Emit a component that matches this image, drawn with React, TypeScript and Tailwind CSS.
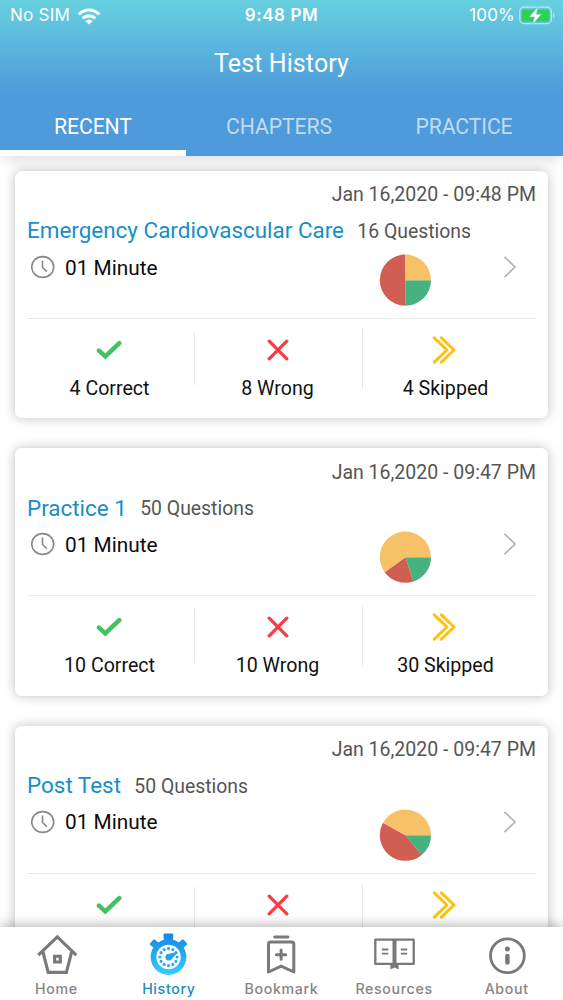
import React from "react";

type Result = {
  date: string;
  title: string;
  questions: number;
  correct: number;
  wrong: number;
  skipped: number;
};

const results: Result[] = [
  { date: "Jan 16,2020 - 09:48 PM", title: "Emergency Cardiovascular Care", questions: 16, correct: 4, wrong: 8, skipped: 4 },
  { date: "Jan 16,2020 - 09:47 PM", title: "Practice 1", questions: 50, correct: 10, wrong: 10, skipped: 30 },
  { date: "Jan 16,2020 - 09:47 PM", title: "Post Test", questions: 50, correct: 7, wrong: 22, skipped: 21 },
];

function Pie({ correct, wrong, skipped }: Pick<Result, "correct" | "wrong" | "skipped">) {
  const total = correct + wrong + skipped;
  const slices = [
    { value: correct, color: "#45b280" },
    { value: wrong, color: "#d15e52" },
    { value: skipped, color: "#f7c168" },
  ];
  let start = 0;
  return (
    <svg className="size-[52px]" viewBox="-26.4 -26.2 52 52">
      {slices.map(({ value, color }) => {
        const end = start + (value / total) * Math.PI * 2;
        const r = 25.6;
        const d = `M0 0L${r * Math.cos(start)} ${r * Math.sin(start)}A${r} ${r} 0 ${end - start > Math.PI ? 1 : 0} 1 ${r * Math.cos(end)} ${r * Math.sin(end)}Z`;
        start = end;
        return <path key={color} d={d} fill={color} />;
      })}
    </svg>
  );
}

function Stat({ icon, label }: { icon: React.ReactNode; label: string }) {
  return (
    <div className="flex w-[167px] flex-col items-center pr-0.5">
      <div className="mt-[17px] flex h-7 items-center">{icon}</div>
      <div className="mt-[13px] text-[19.6px] leading-6 text-[#111] whitespace-nowrap">{label}</div>
    </div>
  );
}

function Card({ r }: { r: Result }) {
  return (
    <section className="mb-[30px] h-[247.4px] shrink-0 rounded-[7px] bg-white px-3 shadow-[0_0_12px_rgba(0,0,0,0.26)]">
      <div className="flex h-[46px] items-center justify-end pt-0.5 text-[19.5px] text-[#555]">{r.date}</div>
      <div className="flex h-7 items-center whitespace-nowrap">
        <span className="text-[22.45px] text-[#168fc7]">{r.title}</span>
        <span className="ml-[13.3px] text-[19.4px] text-[#555] pt-px">{r.questions} Questions</span>
      </div>
      <div className="flex h-[73px] items-start">
        <svg className="mt-2.5 ml-1 size-6" viewBox="0 0 24 24" fill="none" stroke="#898989" strokeWidth="1.6">
          <ellipse cx="11.7" cy="12" rx="11" ry="10.4" />
          <path d="M11.5 5.5v7l4.4 4.2" />
        </svg>
        <span className="ml-[10px] mt-[8.5px] w-[314px] text-[20.8px] leading-7 text-[#0c0c0c]">01 Minute</span>
        <div className="mt-[9px]"><Pie {...r} /></div>
        <svg className="mt-2.5 ml-[71px] h-6 w-4" viewBox="0 0 16 24" fill="none" stroke="#b3b3b3" strokeWidth="1.7">
          <path d="M2.5 1.8 13 12 2.5 22.2" />
        </svg>
      </div>
      <div className="flex border-t border-[#ebebeb]">
        <Stat
          label={`${r.correct} Correct`}
          icon={
            <svg className="mr-px h-5 w-[26px]" viewBox="0 0 26 20" fill="none" stroke="#43c35f" strokeWidth="4.5" strokeLinecap="round" strokeLinejoin="miter">
              <path d="m3 10.6 6.3 5.8L23.3 3.2" />
            </svg>
          }
        />
        <div className="mt-[13px] h-[53px] w-px bg-[#e8e8e8]" />
        <Stat
          label={`${r.wrong} Wrong`}
          icon={
            <svg className="size-[22px]" viewBox="0 0 22 22" fill="none" stroke="#fb3b43" strokeWidth="3.3" strokeLinecap="round">
              <path d="m2.2 2.2 17.6 17.6M19.8 2.2 2.2 19.8" />
            </svg>
          }
        />
        <div className="mt-2.5 h-[60px] w-px bg-[#e8e8e8]" />
        <Stat
          label={`${r.skipped} Skipped`}
          icon={
            <svg className="mr-[3px] h-7 w-6" viewBox="0 0 24 28" fill="none" stroke="#fcc20f" strokeWidth="3" strokeLinecap="round" strokeLinejoin="round">
              <path d="M2.3 1.9 14.9 14 2.3 26.1M9.4 1.9 22 14 9.4 26.1" />
            </svg>
          }
        />
      </div>
    </section>
  );
}

const ticks = Array.from({ length: 12 }, (_, i) => i * 30);

const navItems = [
  {
    label: "Home",
    icon: (
      <svg className="size-[42px]" viewBox="0 0 42 42" fill="none" stroke="#797979" strokeWidth="3.1">
        <path d="M3.3 22.2 22.3 3.8 41.2 22.2" />
        <path d="M8 19 13.2 39.4h18.2L36.6 19" />
        <path d="M19.6 23.3h5.7v5.7h-5.7z" />
      </svg>
    ),
  },
  {
    label: "History",
    icon: (
      <svg className="size-[42px]" viewBox="0.4 -0.5 42 42">
        <defs>
          <linearGradient id="watch" gradientUnits="userSpaceOnUse" x1="0" y1="0" x2="0" y2="42">
            <stop offset="0" stopColor="#1685e7" />
            <stop offset="1" stopColor="#35cffb" />
          </linearGradient>
        </defs>
        <g fill="url(#watch)">
          <rect x="16" y="0" width="9.6" height="6.3" rx="1" />
          <path d="M17.6 5h6.6v4h-6.6z" />
          <path d="m2.5 9.8 3.2-3.5q.8-.8 1.8 0l3.8 3.4-4.8 4.9-3.9-3.2q-.8-.7-.1-1.6ZM39.3 9.8l-3.2-3.5q-.8-.8-1.8 0l-3.8 3.4 4.8 4.9 3.9-3.2q.8-.7.1-1.6Z" />
          <circle cx="20.9" cy="23.5" r="17.9" />
        </g>
        <circle cx="20.9" cy="23.5" r="12.2" fill="white" />
        {ticks.map((angle) => (
          <circle key={angle} cx="20.9" cy="14.9" r="1.55" fill="#27a9ef" transform={`rotate(${angle} 20.9 23.5)`} />
        ))}
        <path d="M30.6 18.2 23.9 25.9c-1.8 2.1-5.6 1.3-6.1-1.5-.4-2.5 1.3-4.4 3.9-4.1z" fill="#23a3ec" />
      </svg>
    ),
  },
  {
    label: "Bookmark",
    icon: (
      <svg className="size-[42px]" viewBox="0 0 42 42" fill="none" stroke="#797979" strokeWidth="3" strokeLinejoin="round" strokeLinecap="round">
        <path d="M14.7 3.9h13.2M10.5 9.1h21.2q2.1 0 2.1 2.1V39L21.1 33.2 8.5 39V11.2q0-2.1 2-2.1Z" />
        <path d="M21.1 17v9.3M16.4 21.7h9.3" />
      </svg>
    ),
  },
  {
    label: "Resources",
    icon: (
      <svg className="size-[42px]" viewBox="0 0 42 42" fill="none" stroke="#797979" strokeWidth="2.3">
        <path d="M2.3 6.7h38.4v24.2H2.3z" strokeLinejoin="round" />
        <path d="M21.5 7v24" strokeWidth="4" />
        <path d="M17.4 31.5h8.2v5.1l-4.1-2-4.1 2z" fill="#797979" stroke="none" />
        <path d="M8.9 16.5h6.4M8.9 20.7h6.4M27.8 16.5h6.4M27.8 20.7h6.4" strokeWidth="1.8" />
      </svg>
    ),
  },
  {
    label: "About",
    icon: (
      <svg className="size-[42px]" viewBox="0 0 42 42" fill="none" stroke="#797979" strokeLinecap="round">
        <circle cx="21.4" cy="22.7" r="16.9" strokeWidth="2.8" />
        <circle cx="21.4" cy="15.9" r="2.5" fill="#797979" stroke="none" />
        <path d="M21.4 22.9v6.6" strokeWidth="4.5" />
      </svg>
    ),
  },
];

function StatusBar() {
  return (
    <div className="grid h-8 grid-cols-3 items-center font-[Inter,sans-serif] text-[17px]">
      <div className="flex items-center pl-2.5">
        <span className="whitespace-nowrap tracking-[0.25px]">No SIM</span>
        <svg className="ml-[7px] h-[17px] w-6" viewBox="0 0 24 17" fill="none" stroke="white" strokeWidth="3.1">
          <path d="M1.8 6.3C7.5.5 16.5.5 22.2 6.3" />
          <path d="M5.7 10.4c3.6-3.4 9-3.4 12.6 0" />
          <path d="M8.2 13.1q3.8-3 7.6 0L12 16.6Z" fill="white" stroke="none" />
        </svg>
      </div>
      <div className="text-center font-semibold tracking-[0.55px]">9:48 PM</div>
      <div className="flex items-center justify-end pr-[7px]">
        <span className="tracking-[0.2px]">100%</span>
        <svg className="ml-[3px] h-5 w-[38px]" viewBox="0 0 38 20">
          <rect x="1.8" y="1.2" width="31.5" height="16.4" rx="4.2" fill="none" stroke="white" strokeOpacity=".55" strokeWidth="1.3" />
          <rect x="3.7" y="3.4" width="27.6" height="12.2" rx="2" fill="#30cf58" />
          <path d="M35.2 6.7v5.8q2.6-2.8 0-5.8Z" fill="white" fillOpacity=".6" />
          <path d="m19.9.9-8.7 10h5.2L14.6 18.2l9-10h-5.2Z" fill="white" stroke="#61c9cf" strokeWidth=".6" />
        </svg>
      </div>
    </div>
  );
}

export default function App() {
  return (
    <div className="flex h-[1000px] w-[563px] flex-col overflow-hidden bg-white font-[Roboto,sans-serif]">
      <header className="relative z-10 flex h-[156px] shrink-0 flex-col bg-[linear-gradient(180deg,#67d1e0_0px,#4e9adb_94px)] text-white shadow-[0_7px_12px_-3px_rgba(0,0,0,0.13)]">
        <StatusBar />
        <h1 className="flex h-[64px] items-center justify-center text-[25px] tracking-[0.1px]">Test History</h1>
        <nav className="flex h-[60px] text-[21.2px] tracking-[-0.1px]">
          <div className="flex w-[186px] items-center justify-center border-b-[6px] border-white pt-2">RECENT</div>
          <div className="flex w-[186px] items-center justify-center pt-0.5 text-[#c0dcf2]">CHAPTERS</div>
          <div className="flex flex-1 items-center justify-center pt-0.5 pr-[7px] text-[#c0dcf2]">PRACTICE</div>
        </nav>
      </header>
      <main className="flex min-h-0 flex-1 flex-col overflow-y-auto px-[15px] pt-[15px] [scrollbar-width:none]">
        {results.map((r) => (
          <Card key={r.title} r={r} />
        ))}
      </main>
      <footer className="relative flex h-[73px] shrink-0 bg-white shadow-[0_-1px_12px_rgba(0,0,0,0.32)]">
        {navItems.map(({ label, icon }) => (
          <div key={label} className="flex flex-1 flex-col items-center pt-[6px] font-[Inter,sans-serif]">
            {icon}
            <span className={label === "History" ? "mt-1 text-[14.2px] leading-5 font-medium tracking-[0.65px] text-[#168ac5]" : "mt-1 text-[14.2px] leading-5 font-medium tracking-[0.65px] text-[#858585]"}>
              {label}
            </span>
          </div>
        ))}
      </footer>
    </div>
  );
}
